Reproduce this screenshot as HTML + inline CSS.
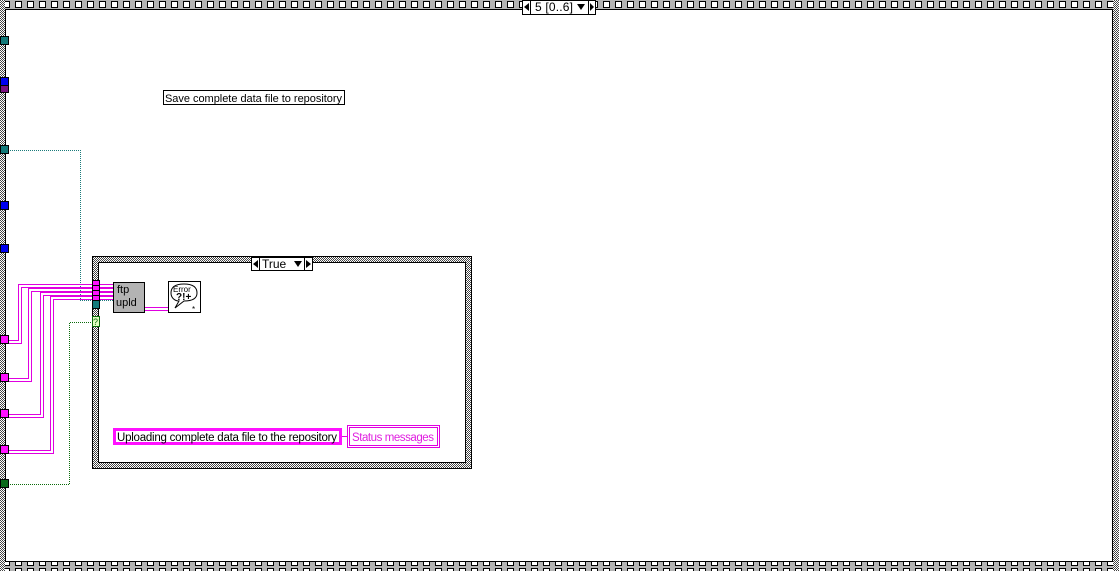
<!DOCTYPE html>
<html><head><style>
html,body{margin:0;padding:0;background:#fff;}
svg{display:block;font-family:"Liberation Sans",Arial,sans-serif;}
</style></head><body>
<svg width="1119" height="571" viewBox="0 0 1119 571" xmlns="http://www.w3.org/2000/svg">
<defs>
<pattern id="film" x="0" y="0" width="12" height="9" patternUnits="userSpaceOnUse">
<rect width="12" height="9" fill="#b4b4b4"/>
<rect x="3.5" y="1.5" width="6" height="6" fill="#fff" stroke="#000" stroke-width="1"/>
</pattern>
<pattern id="chk" x="0" y="0" width="2" height="2" patternUnits="userSpaceOnUse">
<rect width="2" height="2" fill="#fff"/><rect width="1" height="1" fill="#444"/><rect x="1" y="1" width="1" height="1" fill="#444"/>
</pattern>
</defs>
<rect width="1119" height="571" fill="#fff"/>
<rect x="0" y="0" width="1119" height="10" fill="url(#film)"/>
<rect x="0" y="562" width="1119" height="9" fill="url(#film)"/>
<rect x="0" y="0" width="5" height="571" fill="url(#chk)"/>
<rect x="1113" y="0" width="6" height="571" fill="url(#chk)"/>
<rect x="5.5" y="9.5" width="1107" height="552" fill="none" stroke="#000"/>
<rect x="522.5" y="0.5" width="73" height="14" fill="#fff" stroke="#000"/>
<path d="M524 7 L529 3 L529 11Z M590 3 L594 7 L590 11Z" fill="#000"/>
<line x1="530.5" y1="0" x2="530.5" y2="14" stroke="#000"/>
<line x1="588.5" y1="0" x2="588.5" y2="14" stroke="#000"/>
<text x="535" y="11" font-size="12" textLength="38">5 [0..6]</text>
<path d="M577 4 L585 4 L581 10Z" fill="#000"/>
<rect x="163.5" y="90.5" width="181" height="14" fill="#fff" stroke="#000"/>
<text x="165" y="102" font-size="11" textLength="177">Save complete data file to repository</text>
<g fill="none">
<path d="M8 150.5 H80.5 V300.5 H92" stroke="#1a7a7a" stroke-dasharray="1,1"/>
<path d="M8 484.5 H69.5 V322.5 H92" stroke="#0a6a0a" stroke-dasharray="1,1"/>
<g stroke="#e000e0" stroke-width="1">
<path d="M8 340.5 H18.5 V284.5 H92 M8 343.5 H21.5 V287.5 H92"/>
<path d="M8 378.5 H28.5 V288.5 H92 M8 381.5 H31.5 V291.5 H92"/>
<path d="M8 414.5 H40.5 V292.5 H92 M8 417.5 H43.5 V295.5 H92"/>
<path d="M8 450.5 H50.5 V296.5 H92 M8 453.5 H53.5 V299.5 H92"/>
</g>
</g>
<g stroke="#000">
<rect x="0.5" y="36.5" width="8" height="8" fill="#137a7a"/>
<rect x="0.5" y="77.5" width="8" height="8" fill="#0000f0"/>
<rect x="0.5" y="85.5" width="8" height="7" fill="#7a1080"/>
<rect x="0.5" y="145.5" width="8" height="8" fill="#137a7a"/>
<rect x="0.5" y="201.5" width="8" height="8" fill="#0000f0"/>
<rect x="0.5" y="244.5" width="8" height="8" fill="#0000f0"/>
<rect x="0.5" y="335.5" width="8" height="8" fill="#ff10ff"/>
<rect x="0.5" y="373.5" width="8" height="8" fill="#ff10ff"/>
<rect x="0.5" y="409.5" width="8" height="8" fill="#ff10ff"/>
<rect x="0.5" y="445.5" width="8" height="8" fill="#ff10ff"/>
<rect x="0.5" y="479.5" width="8" height="8" fill="#0a6a1a"/>
</g>
<rect x="92" y="256" width="380" height="213" fill="url(#chk)"/>
<rect x="92.5" y="256.5" width="379" height="212" fill="none" stroke="#000"/>
<rect x="98.5" y="262.5" width="367" height="200" fill="#fff" stroke="#000"/>
<rect x="251.5" y="257.5" width="61" height="13" fill="#fff" stroke="#000"/>
<line x1="259.5" y1="257" x2="259.5" y2="270" stroke="#000"/>
<line x1="304.5" y1="257" x2="304.5" y2="270" stroke="#000"/>
<path d="M253 264 L258 260 L258 268Z M306 260 L311 264 L306 268Z M294 261 L302 261 L298 267Z" fill="#000"/>
<text x="262" y="268" font-size="12">True</text>
<g stroke="#e000e0" fill="none">
<path d="M100 284.5 H113 M100 287.5 H113 M100 288.5 H113 M100 291.5 H113 M100 292.5 H113 M100 295.5 H113 M100 296.5 H113 M100 299.5 H113"/>
<path d="M145 307.5 H168 M145 310.5 H168"/>
<path d="M341 436.5 H347"/>
</g>
<path d="M100 300.5 H113" stroke="#1a7a7a" stroke-dasharray="1,1"/>
<rect x="92.5" y="280.5" width="7" height="20" fill="#ff10ff" stroke="#000"/>
<line x1="92" y1="285.5" x2="100" y2="285.5" stroke="#000"/>
<line x1="92" y1="290.5" x2="100" y2="290.5" stroke="#000"/>
<line x1="92" y1="295.5" x2="100" y2="295.5" stroke="#000"/>
<rect x="92.5" y="300.5" width="7" height="8" fill="#137a7a" stroke="#000"/>
<rect x="92.5" y="316.5" width="7" height="10" fill="#e0ffc0" stroke="#0a6a0a"/>
<text x="93" y="325" font-size="9" fill="#0a6a0a">?</text>
<rect x="113.5" y="282.5" width="31" height="30" fill="#b3b3b3" stroke="#000"/>
<text x="117" y="293" font-size="11">ftp</text>
<text x="116" y="306" font-size="11">upld</text>
<rect x="168.5" y="281.5" width="32" height="31" fill="#fff" stroke="#000"/>
<path d="M184 284 C173 284 171 289 171 293 C171 298 175 301 179 301 L175 308 L184 301 C193 301 197 298 197 293 C197 288 194 284 184 284Z" fill="#fff" stroke="#000"/>
<text x="173" y="292" font-size="8">Error</text>
<text x="176" y="300" font-size="10" font-weight="bold">?!+</text>
<text x="192" y="312" font-size="8">*</text>
<rect x="114.5" y="429.5" width="226" height="14" fill="#fff" stroke="#ff10ff" stroke-width="3"/>
<text x="117" y="441" font-size="11.5" textLength="220">Uploading complete data file to the repository</text>
<rect x="347.5" y="425.5" width="92" height="22" fill="#fff" stroke="#e000e0"/>
<rect x="349.5" y="427.5" width="88" height="18" fill="none" stroke="#e000e0"/>
<text x="352" y="441" font-size="11.5" fill="#e020e0" textLength="82">Status messages</text>
</svg>
</body></html>
